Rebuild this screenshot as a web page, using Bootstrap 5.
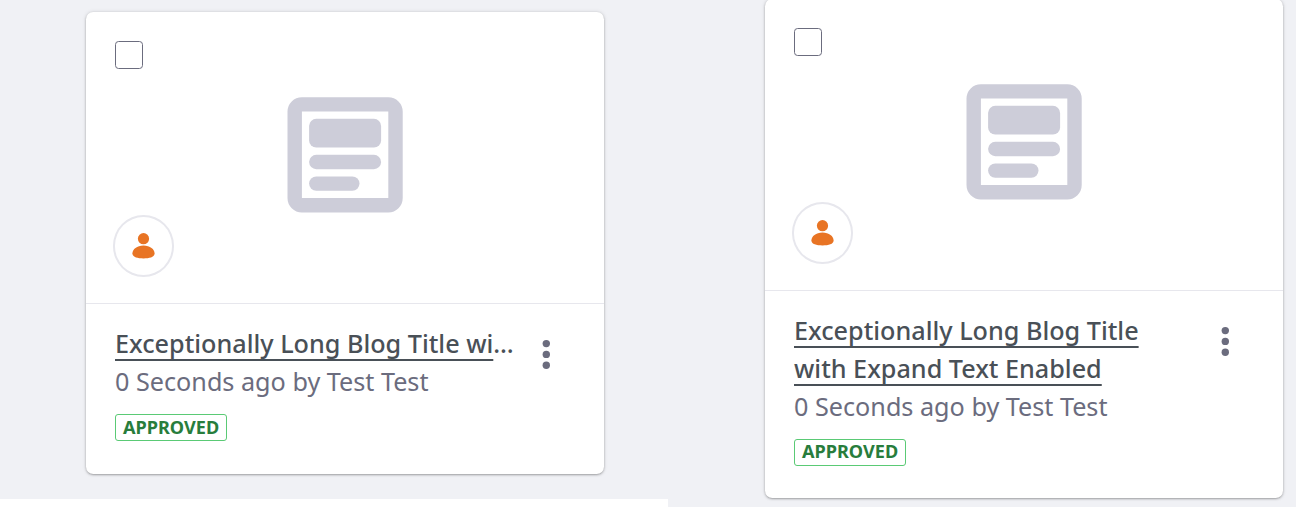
<!DOCTYPE html>
<html lang="en">
<head>
<meta charset="utf-8">
<title>Blog cards</title>
<link href="https://cdn.jsdelivr.net/npm/bootstrap@5.3.0/dist/css/bootstrap.min.css" rel="stylesheet">
<style>
body{font-family:"Noto Sans",sans-serif;font-size:25.2px;line-height:38px;background:#fff;height:507px}
.panel{background:#f0f1f5}
.panel-a{width:668px;height:499px;padding:12px 0 0 86px}
.panel-b{width:628px;height:507px;padding-left:97px}
.asset{width:518px;border:0;border-radius:7.2px;box-shadow:0 1px 3px -1px rgba(0,0,0,.6),0 0 4px rgba(0,0,0,.12)}
.asset-a{height:462px}
.asset-b{height:499px;margin-top:-1px}
.preview{height:292px;border-bottom:1px solid #e7e7ed;padding:29px 27px 26.4px}
.preview .form-check-input{width:28px;height:28px;border:1px solid #6b6c7e;border-radius:3.6px;margin:0 0 0 2px}
.sticker{width:61px;height:61.2px;border:2px solid #e7e7ed}
.sticker svg{margin:-1px 0 0 -1px}
.type-icon{margin-left:113px;margin-top:56px}
.details{padding:20px 29px 0}
.copy{width:402px;color:#6b6c7e}
.headline{color:#495057;font-weight:500}
.headline a{color:inherit;text-decoration:underline;text-decoration-thickness:2px;text-underline-offset:6px;text-decoration-skip-ink:none}
.status{margin-top:14px;height:27px;border:1px solid #5aca75;border-radius:3px;color:#287d3c;font-size:18.1px;line-height:25px;font-weight:700;padding:0 7px;width:112px}
.asset-b .status{line-height:23px}
.more{margin:15px 0 0 24px;width:10px;height:30px}
</style>
</head>
<body class="overflow-hidden">
<svg class="d-none">
  <symbol id="blog" viewBox="-.07 -.03 16.25 16.25"><path fill-rule="evenodd" d="M2 0h12a2 2 0 0 1 2 2v12a2 2 0 0 1-2 2H2a2 2 0 0 1-2-2V2a2 2 0 0 1 2-2zM2 2v12h12V2z"/><rect x="3" y="3" width="10" height="4" rx="1"/><rect x="3" y="8" width="10" height="2" rx="1"/><rect x="3" y="11" width="7" height="2" rx="1"/></symbol>
  <symbol id="user" viewBox="-.5 -.3 24 28"><circle cx="12" cy="6.4" r="5.6"/><path d="M12 13.2C5.5 13.2.9 17 .9 21.2c0 3.6 5 4.9 11.1 4.9s11.1-1.3 11.1-4.9C23.1 17 18.5 13.2 12 13.2z"/></symbol>
  <symbol id="dots" viewBox="-.3 -.4 10 30"><circle cx="5" cy="4.2" r="3.7"/><circle cx="5" cy="15" r="3.7"/><circle cx="5" cy="25.8" r="3.7"/></symbol>
</svg>
<main class="d-flex align-items-start">
  <section class="panel panel-a">
    <article class="card asset asset-a">
      <div class="preview d-flex">
        <div class="d-flex flex-column justify-content-between">
          <input class="form-check-input" type="checkbox" aria-label="Select">
          <span class="sticker rounded-circle d-flex align-items-center justify-content-center"><svg width="24" height="28" fill="#e87424"><use href="#user"/></svg></span>
        </div>
        <svg class="type-icon" width="117" height="117" fill="#cdcdd9"><use href="#blog"/></svg>
      </div>
      <div class="details d-flex align-items-start">
        <div class="copy">
          <div class="headline text-truncate"><a href="#">Exceptionally Long Blog Title with</a></div>
          <div>0 Seconds ago by Test Test</div>
          <div class="status text-nowrap">APPROVED</div>
        </div>
        <svg class="more" fill="#6b6c7e"><use href="#dots"/></svg>
      </div>
    </article>
  </section>
  <section class="panel panel-b">
    <article class="card asset asset-b">
      <div class="preview d-flex">
        <div class="d-flex flex-column justify-content-between">
          <input class="form-check-input" type="checkbox" aria-label="Select">
          <span class="sticker rounded-circle d-flex align-items-center justify-content-center"><svg width="24" height="28" fill="#e87424"><use href="#user"/></svg></span>
        </div>
        <svg class="type-icon" width="117" height="117" fill="#cdcdd9"><use href="#blog"/></svg>
      </div>
      <div class="details d-flex align-items-start">
        <div class="copy">
          <div class="headline"><a href="#">Exceptionally Long Blog Title with Expand Text Enabled</a></div>
          <div>0 Seconds ago by Test Test</div>
          <div class="status text-nowrap">APPROVED</div>
        </div>
        <svg class="more" fill="#6b6c7e"><use href="#dots"/></svg>
      </div>
    </article>
  </section>
</main>
<script src="https://cdn.jsdelivr.net/npm/bootstrap@5.3.0/dist/js/bootstrap.bundle.min.js"></script>
</body>
</html>
